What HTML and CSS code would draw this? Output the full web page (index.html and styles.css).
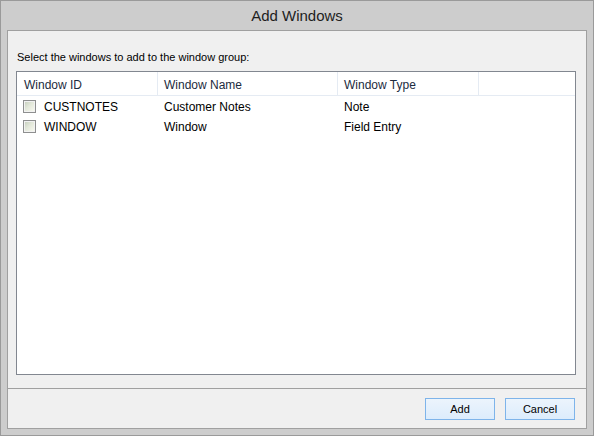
FILE: index.html
```html
<!DOCTYPE html>
<html>
<head>
<meta charset="utf-8">
<link rel="stylesheet" href="styles.css">
</head>
<body>
<div class="window">
  <div class="titlebar">Add Windows</div>
  <div class="client">
    <div class="content">
      <div class="label">Select the windows to add to the window group:</div>
      <div class="listbox">
        <div class="header">
          <div class="hcell c1">Window ID</div>
          <div class="hcell c2">Window Name</div>
          <div class="hcell c3">Window Type</div>
        </div>
        <div class="row">
          <div class="cell c1"><span class="check"></span><span class="txt">CUSTNOTES</span></div>
          <div class="cell c2"><span class="txt">Customer Notes</span></div>
          <div class="cell c3"><span class="txt">Note</span></div>
        </div>
        <div class="row">
          <div class="cell c1"><span class="check"></span><span class="txt">WINDOW</span></div>
          <div class="cell c2"><span class="txt">Window</span></div>
          <div class="cell c3"><span class="txt">Field Entry</span></div>
        </div>
      </div>
    </div>
    <div class="footer">
      <button class="btn">Add</button>
      <button class="btn">Cancel</button>
    </div>
  </div>
</div>
</body>
</html>
```
FILE: styles.css
```css
html, body {
  margin: 0;
  padding: 0;
  background: #cdcdcd;
}
body {
  font-family: "Liberation Sans", Arial, sans-serif;
}
.window {
  width: 594px;
  height: 436px;
  box-sizing: border-box;
  border: 1px solid #9a9a9a;
  background: #cdcdcd;
  display: flex;
  flex-direction: column;
  padding: 0 6px 6px 6px;
}
.titlebar {
  height: 29px;
  display: flex;
  align-items: center;
  justify-content: center;
  font-size: 15px;
  color: #1e1e1e;
  padding-bottom: 1px;
  box-sizing: border-box;
}
.client {
  flex: 1;
  border: 1px solid #a0a0a0;
  background: #f0f0f0;
  display: flex;
  flex-direction: column;
  min-height: 0;
}
.content {
  flex: 1;
  display: flex;
  flex-direction: column;
  padding: 19px 10px 13px 8px;
  min-height: 0;
}
.label {
  font-size: 11px;
  line-height: 14px;
  height: 14px;
  color: #000;
  padding-left: 1px;
  white-space: nowrap;
}
.listbox {
  margin-top: 7px;
  height: 304px;
  box-sizing: border-box;
  border: 1px solid #828790;
  background: #fff;
}
.header {
  display: flex;
  height: 24px;
  box-sizing: border-box;
  border-bottom: 1px solid #e5ebf3;
}
.hcell {
  font-size: 12px;
  color: #1c2b40;
  line-height: 23px;
  padding-top: 2px;
  box-sizing: border-box;
  border-right: 1px solid #e5ebf3;
  padding-left: 6px;
  white-space: nowrap;
}
.c1 { width: 141px; padding-left: 7px; }
.c2 { width: 180px; }
.c3 { width: 141px; }
.row {
  display: flex;
  height: 20px;
}
.cell {
  font-size: 12px;
  color: #000;
  height: 20px;
  box-sizing: border-box;
  padding-left: 6px;
  white-space: nowrap;
  display: flex;
  align-items: center;
}
.txt {
  line-height: 20px;
  padding-top: 2px;
}
.check {
  width: 13px;
  height: 13px;
  box-sizing: border-box;
  border: 1px solid #8e8f8f;
  background: linear-gradient(135deg, #c3ccbb 0%, #e3e8da 45%, #fbfbf2 100%);
  box-shadow: inset 0 0 0 1px #f2f2f2;
  margin-right: 8px;
  flex: none;
}
.footer {
  border-top: 1px solid #a0a0a0;
  display: flex;
  justify-content: flex-end;
  gap: 10px;
  padding: 9px 11px 8px 0;
}
.btn {
  width: 70px;
  height: 22px;
  margin: 0;
  padding: 0;
  box-sizing: border-box;
  border: 1px solid #7eb4ea;
  border-radius: 0;
  background: linear-gradient(#ecf4fc, #dcecfc);
  font-family: "Liberation Sans", Arial, sans-serif;
  font-size: 11px;
  color: #000;
}
```
